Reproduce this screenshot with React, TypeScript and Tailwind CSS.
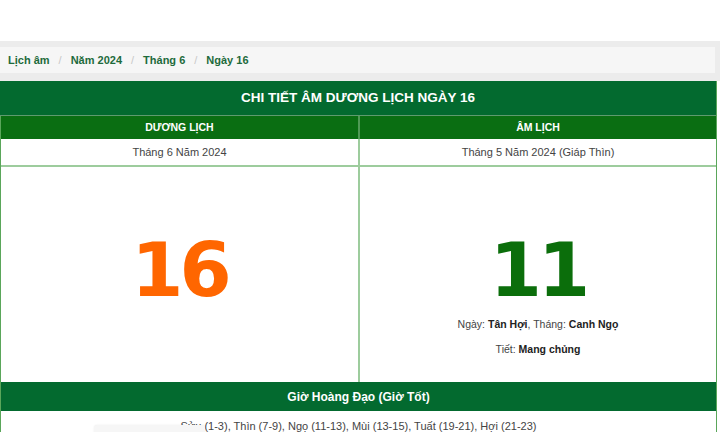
import React from "react";

const sans = { fontFamily: '"Liberation Sans", Arial, sans-serif' };

export default function App() {
  return (
    <div className="relative w-[720px] h-[432px] overflow-hidden bg-white" style={sans}>
      <div className="h-[41px] bg-white" />
      <div className="bg-[#ececec] pt-[6px] pb-[8px] pr-[5px]">
        <div className="h-[26px] bg-[#f6f6f6] flex items-center pl-[8px] text-[11px] font-bold text-[#1e6b3c]">
          <span>Lịch âm</span>
          <span className="mx-[9px] font-normal text-[#c8c8c8]">/</span>
          <span>Năm 2024</span>
          <span className="mx-[9px] font-normal text-[#c8c8c8]">/</span>
          <span>Tháng 6</span>
          <span className="mx-[9px] font-normal text-[#c8c8c8]">/</span>
          <span>Ngày 16</span>
        </div>
      </div>
      <div className="w-[717px] border-r border-[#5aa65a] bg-white">
        <div className="h-[35px] bg-[#036a2f] flex items-center justify-center text-white font-bold text-[13.5px] border-b border-[#5f9a6f]">
          CHI TIẾT ÂM DƯƠNG LỊCH NGÀY 16
        </div>
        <div className="grid grid-cols-[359px_1fr] border-l border-[#5aa65a]">
          <div className="h-[23px] bg-[#0a6e12] flex items-center justify-center text-white font-bold text-[10.5px] border-r-2 border-[#4f9a55]">
            DƯƠNG LỊCH
          </div>
          <div className="h-[23px] bg-[#0a6e12] flex items-center justify-center text-white font-bold text-[10.5px]">
            ÂM LỊCH
          </div>
          <div className="h-[28px] flex items-center justify-center text-[11px] text-[#444] border-r-2 border-b-2 border-[#9dcc9d]">
            Tháng 6 Năm 2024
          </div>
          <div className="h-[28px] flex items-center justify-center text-[11px] text-[#444] border-b-2 border-[#9dcc9d]">
            Tháng 5 Năm 2024 (Giáp Thìn)
          </div>
          <div className="h-[215px] flex flex-col items-center pt-[66px] border-r-2 border-[#9dcc9d]">
            <div
              className="text-[75px] leading-none font-bold text-[#ff6600] h-[75px]"
              style={{ fontFamily: '"DejaVu Sans", Verdana, sans-serif', letterSpacing: "-4px" }}
            >
              16
            </div>
          </div>
          <div className="h-[215px] flex flex-col items-center pt-[66px]">
            <div
              className="text-[75px] leading-none font-bold text-[#0b6e0b] h-[75px]"
              style={{ fontFamily: '"DejaVu Sans", Verdana, sans-serif', letterSpacing: "-4px" }}
            >
              11
            </div>
            <div className="mt-[8px] h-[17px] leading-[17px] text-[10.5px] text-[#444]">
              Ngày: <b className="text-[#222]">Tân Hợi</b>, Tháng: <b className="text-[#222]">Canh Ngọ</b>
            </div>
            <div className="mt-[8px] h-[17px] leading-[17px] text-[10.5px] text-[#444]">
              Tiết: <b className="text-[#222]">Mang chủng</b>
            </div>
          </div>
        </div>
        <div className="h-[29px] bg-[#036a2f] flex items-center justify-center text-white font-bold text-[12px] border-l border-[#5aa65a]">
          Giờ Hoàng Đạo (Giờ Tốt)
        </div>
        <div className="h-[30px] pt-[7px] text-center text-[11px] text-[#444] border-l border-[#5aa65a]">
          Sửu (1-3), Thìn (7-9), Ngọ (11-13), Mùi (13-15), Tuất (19-21), Hợi (21-23)
        </div>
      </div>
      <div className="absolute left-[94px] top-[425px] w-[111px] h-[12px] rounded-t-[3px] bg-[#f6f6f6] shadow-[0_0_2px_rgba(0,0,0,0.08)]" />
    </div>
  );
}
